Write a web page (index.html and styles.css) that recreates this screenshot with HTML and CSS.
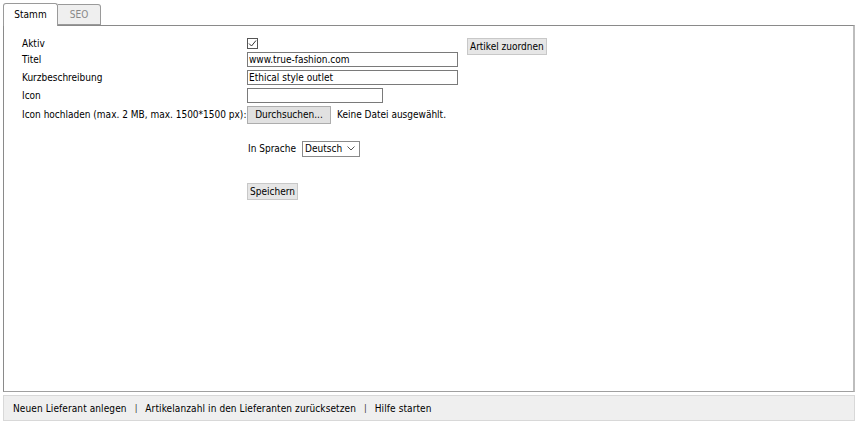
FILE: index.html
```html
<!DOCTYPE html>
<html>
<head>
<meta charset="utf-8">
<link rel="stylesheet" href="styles.css">
</head>
<body>
<div class="page">
  <div class="tabs">
    <div class="tab tab-active">Stamm</div>
    <div class="tab tab-inactive">SEO</div>
  </div>
  <div class="panel">
    <div class="form">
      <div class="row row-aktiv">
        <div class="label">Aktiv</div>
        <div class="field">
          <svg class="checkbox" width="11" height="11" viewBox="0 0 11 11">
            <rect x="0.5" y="0.5" width="10" height="10" fill="#fff" stroke="#555"/>
            <path d="M2 5.5 L4.5 8 L9 2.5" fill="none" stroke="#333" stroke-width="1"/>
          </svg>
        </div>
        <div class="extra"><button class="btn btn-flat">Artikel zuordnen</button></div>
      </div>
      <div class="row row-titel">
        <div class="label">Titel</div>
        <div class="field"><input class="text text-wide" type="text" value="www.true-fashion.com"></div>
      </div>
      <div class="row row-kurz">
        <div class="label">Kurzbeschreibung</div>
        <div class="field"><input class="text text-wide" type="text" value="Ethical style outlet"></div>
      </div>
      <div class="row row-icon">
        <div class="label">Icon</div>
        <div class="field"><input class="text text-short" type="text" value=""></div>
      </div>
      <div class="row row-upload">
        <div class="label">Icon hochladen (max. 2 MB, max. 1500*1500 px):</div>
        <div class="field field-upload">
          <button class="btn btn-browse">Durchsuchen...</button>
          <span class="nofile">Keine Datei ausgewählt.</span>
        </div>
      </div>
      <div class="row row-lang">
        <div class="label"></div>
        <div class="field field-lang">
          <span class="lang-label">In Sprache</span>
          <div class="select">
            <span>Deutsch</span>
            <svg class="chev" width="8" height="5" viewBox="0 0 8 5">
              <path d="M0.5 0.5 L4 4 L7.5 0.5" fill="none" stroke="#555" stroke-width="1"/>
            </svg>
          </div>
        </div>
      </div>
      <div class="row row-save">
        <div class="label"></div>
        <div class="field"><button class="btn btn-flat btn-save">Speichern</button></div>
      </div>
    </div>
  </div>
  <div class="footer">
    <span class="flink">Neuen Lieferant anlegen</span>
    <span class="sep">|</span>
    <span class="flink">Artikelanzahl in den Lieferanten zurücksetzen</span>
    <span class="sep">|</span>
    <span class="flink">Hilfe starten</span>
  </div>
</div>
</body>
</html>
```

FILE: styles.css
```css
* { box-sizing: border-box; }
html, body { margin: 0; padding: 0; background: #fff; }
body {
  font-family: "DejaVu Sans Condensed", "DejaVu Sans", sans-serif;
  font-size: 10px;
  color: #000;
}
.page {
  padding: 3px 3px 0 3px;
  width: 858px;
}
.tabs {
  display: flex;
  height: 22px;
  align-items: flex-end;
  position: relative;
  z-index: 1;
}
.tab {
  height: 22px;
  display: flex;
  align-items: center;
  justify-content: center;
  border: 1px solid #9a9a9a;
  border-bottom: none;
  border-radius: 3px 3px 0 0;
}
.tab-active {
  width: 55px;
  background: #fff;
  height: 23px;
  margin-bottom: -1px;
  padding-bottom: 1px;
}
.tab-inactive {
  width: 43px;
  height: 21px;
  background: #efefef;
  color: #888;
  border-left: none;
  border-bottom: 1px solid #9a9a9a;
  border-radius: 0 3px 0 0;
}
.panel {
  width: 852px;
  height: 367px;
  border: 1px solid #8a8a8a;
  border-right: 2px solid #bdbdbd;
  border-bottom: 1px solid #a0a0a0;
  padding: 10px 0 0 18px;
}
.form {
  display: flex;
  flex-direction: column;
}
.row {
  display: flex;
  align-items: center;
}
.label { width: 225px; flex: none; white-space: nowrap; }
.field { width: 220px; flex: none; display: flex; align-items: center; }
.extra { flex: none; align-self: flex-start; margin-top: 2px; }
.row-aktiv { height: 15px; }
.row-titel { height: 17px; }
.row-kurz { height: 18px; }
.row-icon { height: 18px; }
.row-upload { height: 21px; }
.row-lang { height: 19px; margin-top: 14px; }
.row-save { height: 18px; margin-top: 24px; }
.checkbox { display: block; }
.text {
  height: 15px;
  border: 1px solid #7a7a7a;
  padding: 0 1px;
  font: inherit;
  color: #000;
  background: #fff;
  outline: none;
}
.text-wide { width: 211px; }
.text-short { width: 136px; }
.btn {
  font: inherit;
  color: #000;
  padding: 0;
  cursor: default;
}
.btn-flat {
  height: 17px;
  background: #e6e6e6;
  border: 1px solid #c8c8c8;
  padding: 0 2px;
}
.btn-browse {
  width: 84px;
  height: 18px;
  background: #e1e1e1;
  border: 1px solid #adadad;
}
.nofile { margin-left: 6px; white-space: nowrap; }
.field-upload, .field-lang { width: auto; }
.lang-label { margin-left: 1px; margin-right: 6px; }
.select {
  width: 58px;
  height: 16px;
  border: 1px solid #8a8a8a;
  display: flex;
  align-items: center;
  justify-content: space-between;
  padding: 0 4px 0 2px;
}
.chev { display: block; }
.btn-save { width: 51px; height: 17px; }
.footer {
  margin-top: 3px;
  width: 852px;
  height: 26px;
  background: #efefef;
  border: 1px solid #d8d8d8;
  display: flex;
  align-items: center;
  padding-left: 9px;
  white-space: nowrap;
}
.flink { letter-spacing: 0.1px; }
.sep { margin: 0 8px; color: #333; font-size: 9px; }
```
